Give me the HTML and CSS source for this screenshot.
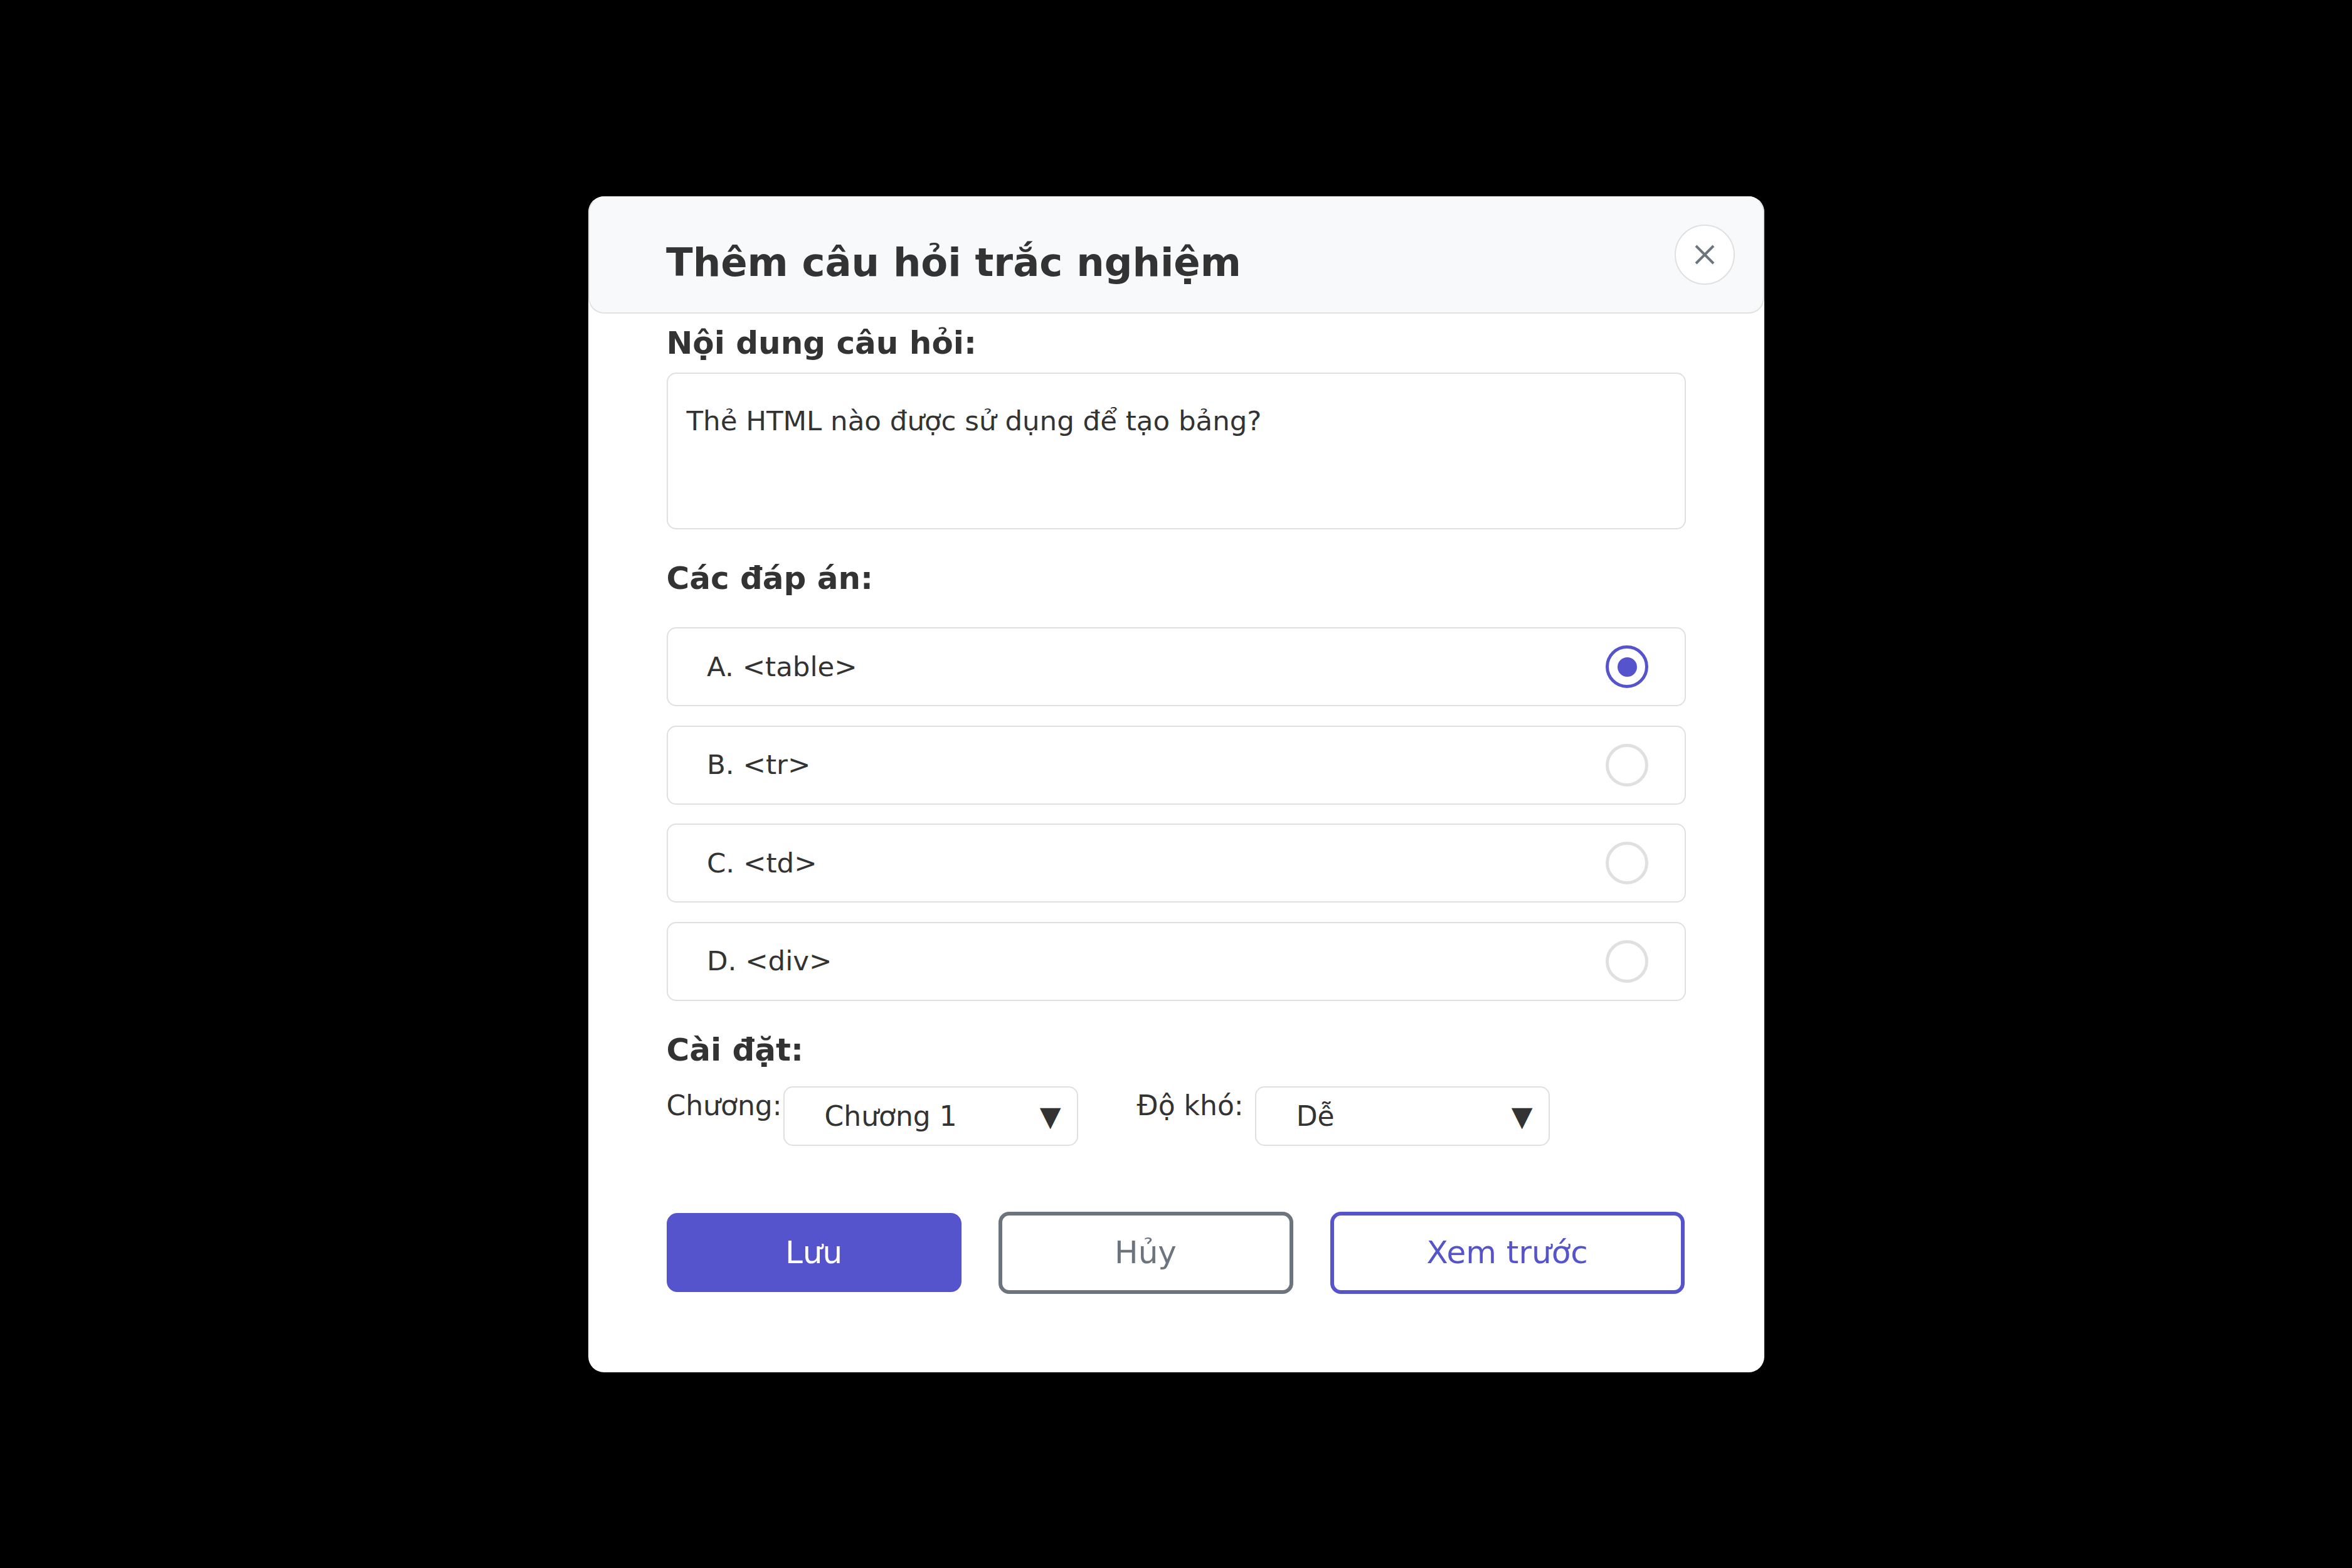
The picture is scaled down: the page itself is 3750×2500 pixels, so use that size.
FILE: index.html
```html
<!DOCTYPE html>
<html lang="vi">
<head>
<meta charset="utf-8">
<title>Thêm câu hỏi trắc nghiệm</title>
<link rel="stylesheet" href="styles.css">
</head>
<body>
<div class="modal">
  <div class="modal-header">
    <h2 class="modal-title">Thêm câu hỏi trắc nghiệm</h2>
    <button class="close-btn" aria-label="Đóng">
      <svg width="32" height="32" viewBox="0 0 32 32"><path d="M2 2 L30 30 M30 2 L2 30" stroke="#6c757d" stroke-width="4" fill="none"/></svg>
    </button>
  </div>
  <div class="modal-body">
    <div class="section-label">Nội dung câu hỏi:</div>
    <div class="question-box">Thẻ HTML nào được sử dụng để tạo bảng?</div>

    <div class="section-label section-gap">Các đáp án:</div>
    <div class="options">
      <div class="option"><span class="option-text">A. &lt;table&gt;</span><span class="radio checked"></span></div>
      <div class="option"><span class="option-text">B. &lt;tr&gt;</span><span class="radio"></span></div>
      <div class="option"><span class="option-text">C. &lt;td&gt;</span><span class="radio"></span></div>
      <div class="option"><span class="option-text">D. &lt;div&gt;</span><span class="radio"></span></div>
    </div>

    <div class="section-label section-gap">Cài đặt:</div>
    <div class="settings">
      <div class="field">
        <span class="field-label">Chương:</span>
        <div class="select select-first"><span>Chương 1</span><span class="arrow">▼</span></div>
      </div>
      <div class="field">
        <span class="field-label">Độ khó:</span>
        <div class="select select-second"><span>Dễ</span><span class="arrow">▼</span></div>
      </div>
    </div>

    <div class="actions">
      <button class="btn btn-primary">Lưu</button>
      <button class="btn btn-secondary">Hủy</button>
      <button class="btn btn-outline">Xem trước</button>
    </div>
  </div>
</div>
</body>
</html>
```
FILE: styles.css
```css
html, body {
  margin: 0;
  padding: 0;
  background: #000;
}
body {
  min-height: 100vh;
  display: flex;
  align-items: center;
  justify-content: center;
  font-family: "DejaVu Sans", "Noto Sans", sans-serif;
  color: #333;
}
.modal {
  width: 1875px;
  box-sizing: border-box;
  background: #fff;
  border-radius: 25px;
  overflow: hidden;
}
.modal-header {
  height: 187px;
  box-sizing: border-box;
  background: #f8f9fa;
  border: 2.5px solid #e2e2e2;
  border-top-color: #f8f9fa;
  border-radius: 25px;
  display: flex;
  align-items: center;
  justify-content: space-between;
  padding: 0 45px 0 122.5px;
}
.modal-title {
  margin: 24px 0 0;
  font-size: 62.5px;
  font-weight: bold;
  line-height: 73px;
  color: #333;
}
.close-btn {
  width: 96px;
  height: 96px;
  border-radius: 50%;
  border: 2.5px solid #e0e0e0;
  background: #fff;
  display: flex;
  align-items: center;
  justify-content: center;
  padding: 0;
  margin-top: 0;
}
.close-btn svg { display: block; }
.modal-body {
  padding: 18.5px 125px 125px;
}
.section-label {
  font-size: 50px;
  font-weight: bold;
  line-height: 58px;
  margin-bottom: 18px;
}
.section-gap {
  margin-top: 49px;
}
.question-box {
  height: 250px;
  box-sizing: border-box;
  border: 2.5px solid #e0e0e0;
  border-radius: 15px;
  padding: 50px 30px 0;
  font-size: 43.5px;
  line-height: 51px;
}
.options {
  display: flex;
  flex-direction: column;
  gap: 30.5px;
  padding-top: 31px;
}
.option {
  height: 126px;
  box-sizing: border-box;
  border: 2.5px solid #e0e0e0;
  border-radius: 15px;
  display: flex;
  align-items: center;
  justify-content: space-between;
  padding: 0 57.5px 0 62.5px;
}
.option-text {
  font-size: 43.5px;
  line-height: 51px;
}
.radio {
  width: 68px;
  height: 68px;
  box-sizing: border-box;
  border-radius: 50%;
  border: 5px solid #e0e0e0;
  position: relative;
}
.radio.checked {
  border-color: #5654cc;
}
.radio.checked::after {
  content: "";
  position: absolute;
  left: 13.5px;
  top: 13.5px;
  width: 31px;
  height: 31px;
  border-radius: 50%;
  background: #5654cc;
}
.settings {
  display: flex;
  gap: 94px;
  margin-top: 29px;
}
.field {
  display: flex;
  align-items: flex-start;
}
.field-label {
  font-size: 44px;
  line-height: 51px;
  padding-top: 5px;
}
.select {
  width: 470px;
  height: 95px;
  box-sizing: border-box;
  border: 2.5px solid #e0e0e0;
  border-radius: 15px;
  display: flex;
  align-items: center;
  justify-content: space-between;
  padding: 0 25px 0 64px;
  font-size: 44px;
  line-height: 51px;
}
.select-first { margin-left: 2px; }
.select-second { margin-left: 18px; }
.arrow {
  font-size: 44px;
  color: #333;
}
.actions {
  display: flex;
  align-items: center;
  gap: 59px;
  margin-top: 105px;
}
.btn {
  min-width: 470px;
  flex-shrink: 0;
  white-space: nowrap;
  box-sizing: border-box;
  font-family: "DejaVu Sans", "Noto Sans", sans-serif;
  font-size: 50px;
  line-height: 58px;
  border-radius: 17px;
  padding: 0 148px;
  background: #fff;
}
.btn-primary {
  height: 126px;
  background: #5654cc;
  color: #fff;
  border: none;
}
.btn-secondary {
  height: 131px;
  border: 6px solid #6c757d;
  color: #6c757d;
}
.btn-outline {
  height: 131px;
  border: 6px solid #5654cc;
  color: #5654cc;
}
```
